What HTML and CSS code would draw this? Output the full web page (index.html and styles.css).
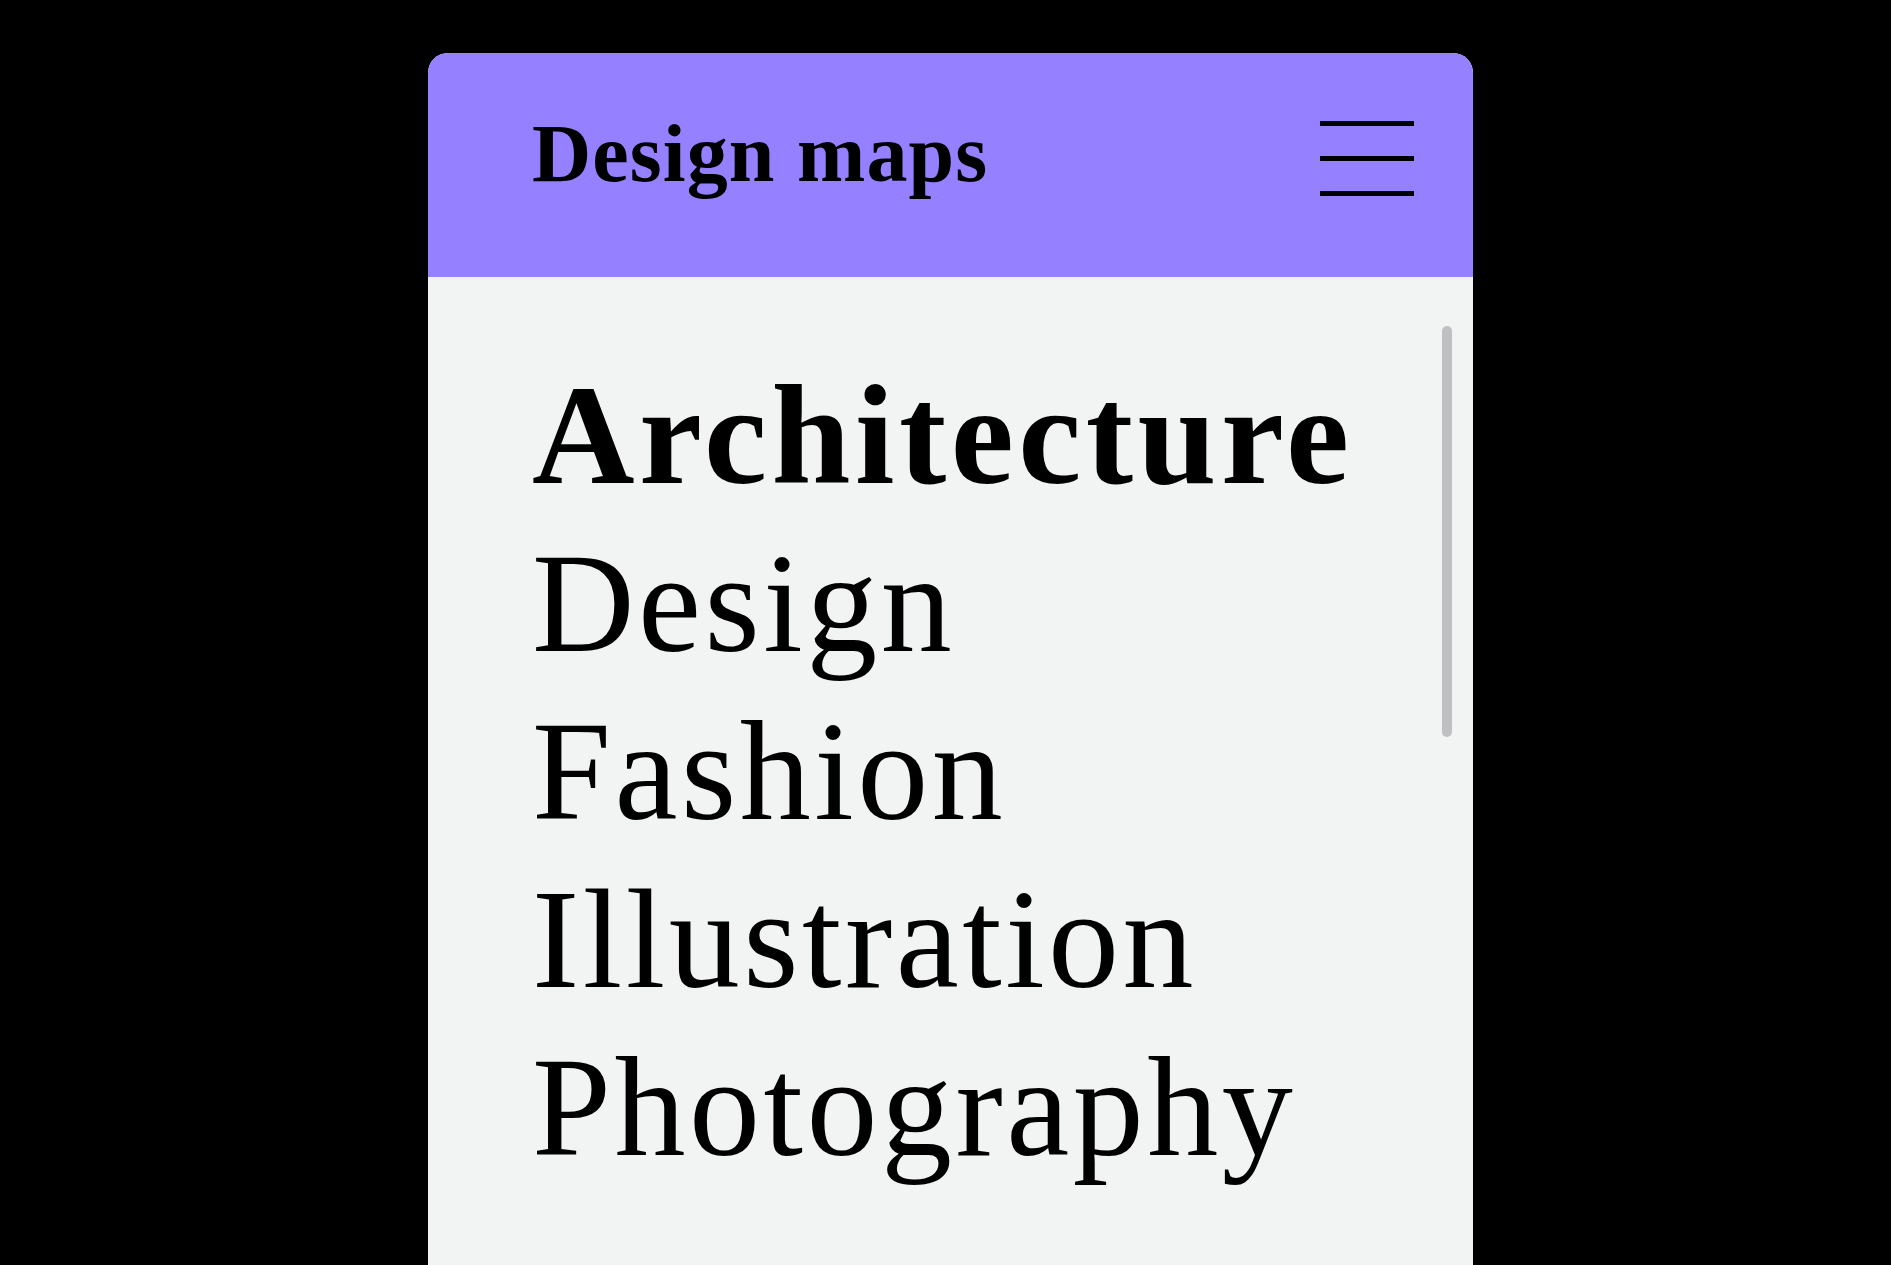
FILE: index.html
```html
<!DOCTYPE html>
<html lang="en">
<head>
<meta charset="utf-8">
<title>Design maps</title>
<link rel="stylesheet" href="styles.css">
</head>
<body>
<div class="card">
  <header class="header">
    <h1 class="title">Design maps</h1>
    <button class="menu" aria-label="Menu">
      <span class="bar"></span>
      <span class="bar"></span>
      <span class="bar"></span>
    </button>
  </header>
  <nav class="content">
    <ul class="list">
      <li class="item item-active">Architecture</li>
      <li class="item">Design</li>
      <li class="item">Fashion</li>
      <li class="item">Illustration</li>
      <li class="item">Photography</li>
    </ul>
    <div class="scroll-thumb"></div>
  </nav>
</div>
</body>
</html>
```

FILE: styles.css
```css
html, body {
  margin: 0;
  padding: 0;
  background: #000;
  height: 100%;
  overflow: hidden;
}
body {
  font-family: "Liberation Serif", "Times New Roman", serif;
  color: #000;
}
.card {
  margin: 53px 0 0 428px;
  width: 1045px;
  height: 1212px;
  border-radius: 20px 20px 0 0;
  overflow: hidden;
  background: #f2f4f3;
  display: flex;
  flex-direction: column;
}
.header {
  height: 224px;
  box-sizing: border-box;
  background: #9580ff;
  display: flex;
  align-items: flex-start;
  justify-content: space-between;
  padding: 60px 59px 0 104px;
}
.title {
  margin: 0;
  font-size: 82px;
  line-height: 82px;
  font-weight: 700;
  letter-spacing: 1.1px;
}
.menu {
  margin-top: 8px;
  width: 94px;
  padding: 0;
  border: 0;
  background: transparent;
  display: flex;
  flex-direction: column;
  gap: 30px;
}
.bar {
  display: block;
  width: 94px;
  height: 5px;
  background: #000;
}
.content {
  position: relative;
  flex: 1;
  padding: 74px 0 0 104px;
}
.list {
  list-style: none;
  margin: 0;
  padding: 0;
}
.item {
  font-size: 142px;
  line-height: 168px;
  white-space: nowrap;
  letter-spacing: 3.5px;
}
.item-active {
  font-weight: 700;
  letter-spacing: 4.5px;
}
.scroll-thumb {
  position: absolute;
  top: 49px;
  right: 21px;
  width: 10px;
  height: 411px;
  border-radius: 5px;
  background: #bfc0c2;
}
```
